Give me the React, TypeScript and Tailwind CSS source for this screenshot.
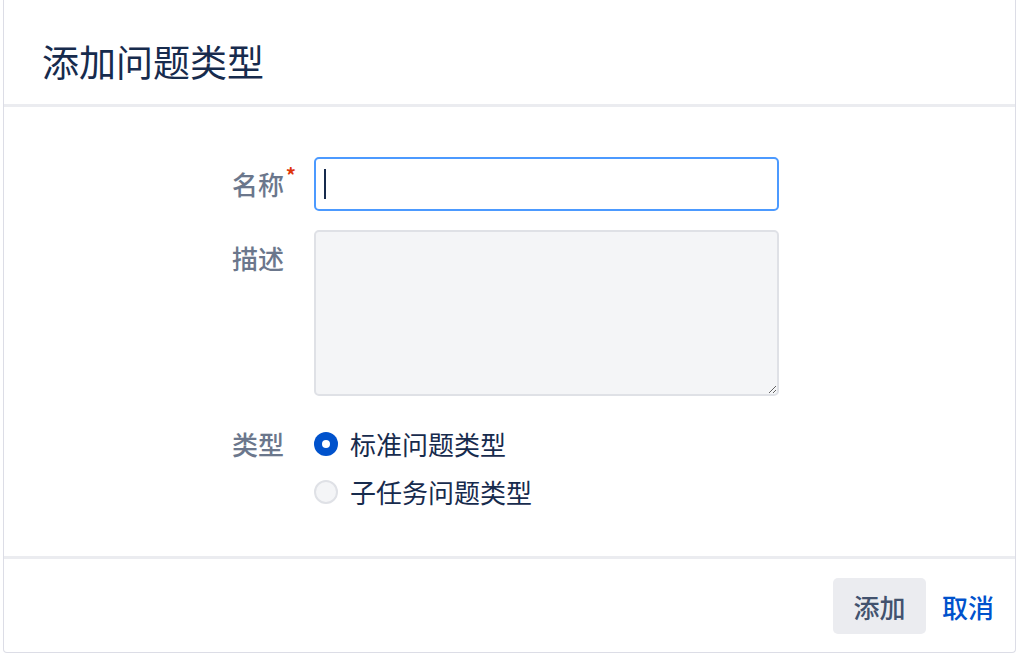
export default function App() {
  const font = { fontFamily: '"Noto Sans CJK SC", "Noto Sans", sans-serif' };
  return (
    <div className="w-[1018px] h-[656px] bg-white overflow-hidden" style={font}>
      <div className="ml-[3px] w-[1013px] h-[653px] flex flex-col border-x border-b border-[#dcdde6] rounded-b-[4px] bg-white">
        <header className="h-[107px] shrink-0 flex items-center pl-[38px] pt-[18px] border-b-[3px] border-[#ebecf0]">
          <h2 className="text-[37px] leading-none text-[#172b4d] font-normal">添加问题类型</h2>
        </header>

        <div className="flex-1 pt-[50px] flex flex-col gap-[19px]">
          <div className="flex items-center">
            <label className="w-[280px] text-right text-[26px] leading-none text-[#6b778c] font-medium relative">
              名称
              <span className="absolute right-[-12px] top-[-6px] text-[20px] font-bold text-[#de350b]">*</span>
            </label>
            <div className="ml-[30px] w-[465px] h-[54px] rounded-[5px] border-2 border-[#4c9aff] bg-white flex items-center pl-[8px]">
              <span className="w-[2px] h-[30px] bg-[#172b4d]" />
            </div>
          </div>

          <div className="flex items-start">
            <label className="w-[280px] text-right text-[26px] leading-none text-[#6b778c] font-medium pt-[15px]">描述</label>
            <textarea className="ml-[30px] w-[465px] h-[166px] rounded-[5px] border-2 border-[#dfe1e6] bg-[#f4f5f7] outline-none" />
          </div>

          <div className="flex items-start pt-[5px]">
            <label className="w-[280px] text-right text-[26px] leading-[48px] text-[#6b778c] font-medium">类型</label>
            <div className="ml-[30px] flex flex-col">
              <div className="flex items-center h-[48px] gap-[12px]">
                <span className="w-[24px] h-[24px] rounded-full bg-[#0052cc] flex items-center justify-center">
                  <span className="w-[8px] h-[8px] rounded-full bg-white" />
                </span>
                <span className="text-[26px] leading-none text-[#172b4d]">标准问题类型</span>
              </div>
              <div className="flex items-center h-[48px] gap-[12px]">
                <span className="w-[24px] h-[24px] rounded-full bg-[#f4f5f7] border-2 border-[#dfe1e6]" />
                <span className="text-[26px] leading-none text-[#172b4d]">子任务问题类型</span>
              </div>
            </div>
          </div>
        </div>

        <footer className="h-[96px] shrink-0 border-t-[3px] border-[#ebecf0] flex items-start justify-end pt-[19px] pr-[21px] gap-[16px]">
          <button className="h-[56px] w-[93px] rounded-[5px] bg-[#ebecf0] text-[26px] text-[#42526e] font-medium">添加</button>
          <button className="h-[56px] text-[26px] text-[#0052cc] font-medium">取消</button>
        </footer>
      </div>
    </div>
  );
}
